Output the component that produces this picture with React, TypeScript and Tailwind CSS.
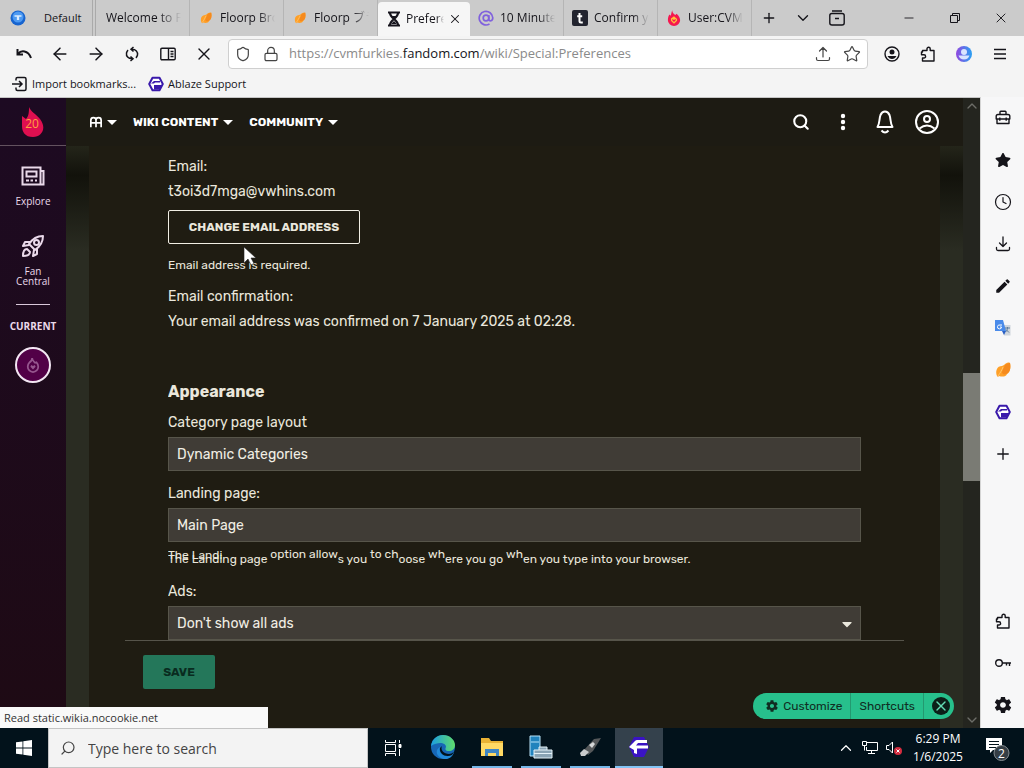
import type { ReactNode } from "react";
import {
  ArrowLeft,
  ArrowRight,
  ChevronDown,
  ChevronUp,
  Clock,
  Lock,
  Minus,
  Plus,
  Search,
  Shield,
  Star,
  X,
} from "lucide-react";
import { FaCaretDown, FaStar } from "react-icons/fa";
import { IoMdSettings } from "react-icons/io";
import { MdEdit } from "react-icons/md";

type IconProps = { className?: string };

function Leaf({ className }: IconProps) {
  return (
    <svg viewBox="0 0 16 16" className={className}>
      <path d="M2 14C0 9 2 4 7 4l2-1c2-2 4-3 6-2 1 5 0 9-3 11-1 3-5 3-8 2l-1 1z" fill="#ffa028" />
      <path d="M10 3c1-1 3-2 5-2 1 5 0 10-4 11-2 1-4 0-4-2z" fill="#f58a1e" />
      <path d="M3 14C5 11 7 8 8 5" stroke="#ffc56d" fill="none" />
    </svg>
  );
}

function Ablaze({ className }: IconProps) {
  return (
    <svg viewBox="0 0 16 16" className={className}>
      <path d="M4.500 1.800h7L14.800 8l-3.300 6.200h-7L1.200 8z" fill="#fff" stroke="#3a1aab" strokeWidth="2" strokeLinejoin="round" />
      <path d="m3 7.500 3-2.500h6v1.500H7L6 7.500zM6 9h8l-2.500 4.500H6z" fill="#3a1aab" />
    </svg>
  );
}

function Flame({ className }: IconProps) {
  return (
    <svg viewBox="0 0 16 18" className={className}>
      <path d="M6 0c0 3 2 4 3.500 5.500L11 4c3 3 4 5 4 7.500a7 6.500 0 0 1-14 0C1 8 2 6 3 5l1 1.500C5 5 5 2 6 0z" fill="#f5184f" />
      <path d="M8 15.500 4.500 12V9.500L8 7l3.500 3v2z" fill="#ffc23a" />
      <path d="m8 13.500-2-2V10l2 1.200L10 10v1.500z" fill="#f5184f" />
    </svg>
  );
}

function Puzzle({ className }: IconProps) {
  return (
    <svg viewBox="0 0 16 16" fill="none" stroke="currentColor" strokeWidth="1.400" strokeLinejoin="round" className={className}>
      <path d="M2.500 6V4.500H7V2.800a1.600 1.600 0 0 1 3.200 0v1.700H14V15H2.500v-3H4a1.500 1.500 0 0 0 0-3.200H1.500V6z" />
    </svg>
  );
}

function Account({ className }: IconProps) {
  return (
    <svg viewBox="0 0 16 16" fill="none" stroke="currentColor" strokeWidth="1.400" className={className}>
      <circle cx="8" cy="8" r="7" />
      <circle cx="8" cy="6" r="2.500" fill="currentColor" stroke="none" />
      <path d="M3.500 10h9c-1 2-2.500 3-4.500 3s-3.500-1-4.500-3z" fill="currentColor" stroke="none" />
    </svg>
  );
}

function Toolbox({ className }: IconProps) {
  return (
    <svg viewBox="0 0 16 16" fill="none" stroke="currentColor" strokeWidth="1.400" strokeLinejoin="round" className={className}>
      <path d="M5 4.500V2q0-.8.800-.8h4.400q.8 0 .8.800v2.500M3 4.500h10q1.800 0 1.800 1.800V9H1.200V6.300Q1.200 4.500 3 4.500zM2 9v4.500h12V9M4.800 7.500v3.200M11.200 7.500v3.200" />
    </svg>
  );
}

function Download({ className }: IconProps) {
  return (
    <svg viewBox="0 0 16 16" fill="none" stroke="currentColor" strokeWidth="1.300" strokeLinecap="round" strokeLinejoin="round" className={className}>
      <path d="M8 1v9.500M4.500 7 8 10.500 11.500 7M1.500 11.500V13q0 1.500 1.500 1.500h10q1.500 0 1.500-1.500v-1.500" />
    </svg>
  );
}

function Share({ className }: IconProps) {
  return (
    <svg viewBox="0 0 16 16" fill="none" stroke="currentColor" strokeWidth="1.200" strokeLinecap="round" strokeLinejoin="round" className={className}>
      <path d="M8 11V1.500M4.500 5 8 1.500 11.500 5M1.500 11.500V13q0 1.500 1.500 1.500h10q1.500 0 1.500-1.500v-1.500" />
    </svg>
  );
}

function Translate({ className }: IconProps) {
  return (
    <svg viewBox="0 0 16 16" className={className}>
      <path d="M6 5h9.500v10.500H9z" fill="#cfd5dc" />
      <path d="M0 0h8l3 11H0z" fill="#4a8bea" />
      <path d="M7 5H5a2 2 0 1 0 1.500 2H5" stroke="#fff" fill="none" />
      <path d="M10 8h5M12.500 7v1c0 2-1 3-2 4M11 9.500l3 3" stroke="#5f7d9c" fill="none" />
      <path d="M7 11h4l-2 4z" fill="#2a5fc4" />
    </svg>
  );
}

const tabs: { title: string; icon?: ReactNode; active?: boolean }[] = [
  { title: "Welcome to Floorp" },
  { title: "Floorp Browser", icon: <Leaf className="size-3" /> },
  { title: "Floorp ブラウザ", icon: <Leaf className="size-3" /> },
  {
    title: "Preferences",
    active: true,
    icon: (
      <svg viewBox="0 0 16 16" className="size-4">
        <path d="M2 1.500h12M2 14.500h12M4 2c0 5 8 7 8 12M12 2c0 5-8 7-8 12" stroke="#15131c" strokeWidth="2.200" fill="none" />
        <path d="M5.500 5h5L8 8zM8 10l3 3H5z" fill="#15131c" />
      </svg>
    ),
  },
  {
    title: "10 Minute Mail",
    icon: (
      <svg viewBox="0 0 16 16" fill="none" stroke="#8061dd" strokeWidth="1.700" className="size-4">
        <circle cx="8" cy="8" r="2.800" />
        <path d="M10.800 5v4.200c0 2.400 4 2.200 4-1.500A6.800 6.800 0 1 0 11.500 14" />
      </svg>
    ),
  },
  {
    title: "Confirm your email",
    icon: (
      <svg viewBox="0 0 16 16" className="size-4">
        <rect width="16" height="16" rx="2" fill="#22242f" />
        <path d="M7.500 3v8q0 1.500 1.500 1.500h1.800M5.200 6.300h5" stroke="#fff" strokeWidth="2" fill="none" />
      </svg>
    ),
  },
  { title: "User:CVM", icon: <Flame className="h-4 w-3.5" /> },
];

function TabStrip() {
  return (
    <div className="flex h-9 shrink-0 items-stretch bg-[#cbcbcb]">
      <button className="flex w-[93px] items-center gap-[18px] border-r border-[#aaa] pl-2.5 text-[11px]">
        <svg viewBox="0 0 16 16" className="size-4">
          <circle cx="8" cy="8" r="7.500" fill="#1764cf" />
          <circle cx="8" cy="7" r="5.500" fill="#4d9af2" />
          <path d="M4.500 6h3v4M11.500 6h-3v4" stroke="#d9ebff" strokeWidth="1.300" fill="none" />
        </svg>
        Default
      </button>
      <div className="ml-0.5 flex border-l border-[#aaa]">
        {tabs.map((tab) => (
          <div
            key={tab.title}
            className={
              tab.active
                ? "mt-0.5 flex w-[92px] items-center gap-1 rounded-t-sm bg-[#f6f6f6] px-2"
                : "flex w-[94px] items-center gap-1 border-r border-[#b5b5b5] pr-2 pl-2 first:pl-2.5"
            }
          >
            {tab.icon && <span className="flex w-4 shrink-0 justify-center">{tab.icon}</span>}
            <a
              href="#"
              className={
                tab.active
                  ? "w-10 overflow-hidden mask-r-from-80% whitespace-nowrap"
                  : "flex-1 overflow-hidden mask-r-from-70% whitespace-nowrap not-first:ml-0.5"
              }
            >
              {tab.title}
            </a>
            {tab.active && (
              <button aria-label="Close tab">
                <X className="size-3.5" strokeWidth={1.8} />
              </button>
            )}
          </div>
        ))}
      </div>
      <div className="flex flex-1 items-center">
        <button aria-label="New tab" className="flex w-[34px] justify-center">
          <Plus className="size-4" strokeWidth={2} />
        </button>
        <button aria-label="List all tabs" className="flex w-[34px] justify-center">
          <ChevronDown className="size-[18px]" strokeWidth={1.8} />
        </button>
        <button aria-label="Recent browsing" className="flex w-[34px] justify-center">
          <svg viewBox="0 0 16 16" fill="none" stroke="currentColor" strokeWidth="1.400" className="size-4">
            <path d="M3 1h10M.8 5.500Q.8 3.500 3 3.500h10q2.200 0 2.200 2V13q0 2-2.200 2H3q-2.200 0-2.200-2zM6 8.500h4" />
          </svg>
        </button>
        <div className="ml-auto flex items-center">
          <button aria-label="Minimize" className="flex w-[46px] justify-center">
            <Minus className="size-3.5" strokeWidth={1.5} />
          </button>
          <button aria-label="Restore" className="flex w-[46px] justify-center">
            <svg viewBox="0 0 12 12" fill="none" stroke="currentColor" className="size-3">
              <path d="M1.500 3.500h7v7h-7zM3.500 3.500v-2h7v7h-2" />
            </svg>
          </button>
          <button aria-label="Close" className="flex w-[46px] justify-center">
            <X className="size-4" strokeWidth={1.4} />
          </button>
        </div>
      </div>
    </div>
  );
}

function Toolbar() {
  return (
    <div className="flex h-[35px] shrink-0 items-center bg-[#f4f4f4] pl-1.5">
      <button aria-label="Undo close tab" className="flex w-9 justify-center">
        <svg viewBox="0 0 16 16" fill="none" stroke="currentColor" strokeWidth="2" className="size-4">
          <path d="M1.500 3v5.500H7M2 8c3-4 10-4 13 4" />
        </svg>
      </button>
      <button aria-label="Back" className="flex w-9 justify-center">
        <ArrowLeft className="size-5" strokeWidth={1.8} />
      </button>
      <button aria-label="Forward" className="flex w-9 justify-center">
        <ArrowRight className="size-5" strokeWidth={1.8} />
      </button>
      <button aria-label="Reload all tabs" className="flex w-9 justify-center">
        <svg viewBox="0 0 16 16" fill="none" stroke="currentColor" strokeWidth="1.500" className="size-4">
          <path d="M9.500 1 7 3.200l2.500 2.300M7.500 3.200C12 3 14 6 13.500 9q-.4 1.800-1.600 2.800M6.500 15 9 12.800l-2.500-2.300M8.500 12.800C4 13 2 10 2.500 7q.4-1.800 1.600-2.800" />
        </svg>
      </button>
      <button aria-label="Sidebar" className="flex w-9 justify-center">
        <svg viewBox="0 0 16 14" fill="none" stroke="currentColor" strokeWidth="1.400" className="h-3.5 w-4">
          <path d="M.8 2.500Q.8 1.200 2 1.200h12q1.200 0 1.200 1.300v9q0 1.300-1.200 1.300H2q-1.200 0-1.200-1.300zM8.500 1v12M10.500 4.500h3M10.500 7h3M10.500 9.500h3" />
        </svg>
      </button>
      <button aria-label="Stop" className="flex w-9 justify-center">
        <X className="size-5" strokeWidth={1.6} />
      </button>
      <div className="relative ml-1.5 flex h-[30px] flex-1 items-center rounded-sm border border-[#cfcfcf] bg-white px-1.5">
        <Shield className="size-4 text-[#444]" strokeWidth={1.8} />
        <Lock className="ml-3 size-4 text-[#444]" strokeWidth={1.8} />
        <label htmlFor="address" className="sr-only">Address</label>
        <input
          id="address"
          defaultValue="https://cvmfurkies.fandom.com/wiki/Special:Preferences"
          className="ml-2.5 min-w-0 flex-1 text-[13px] text-transparent outline-none"
        />
        {/* coloured copy of the address, the host is darker than the rest */}
        <div aria-hidden="true" className="pointer-events-none absolute left-[60px] text-[13px] text-[#8a8a8a]">
          https://cvmfurkies.<span className="text-[#15141a]">fandom.com</span>/wiki/Special:Preferences
        </div>
        <button aria-label="Share">
          <Share className="size-4 text-[#444]" />
        </button>
        <button aria-label="Bookmark" className="ml-3">
          <Star className="size-[18px] text-[#444]" strokeWidth={1.6} />
        </button>
      </div>
      <div className="ml-1.5 flex pr-1.5">
        <button aria-label="Account" className="flex w-9 justify-center">
          <Account className="size-4" />
        </button>
        <button aria-label="Extensions" className="flex w-9 justify-center">
          <Puzzle className="size-4" />
        </button>
        <button aria-label="Profile" className="flex w-9 justify-center">
          <svg viewBox="0 0 16 16" className="size-4">
            <defs>
              <linearGradient id="profile" x2="1">
                <stop stopColor="#9147df" />
                <stop offset="1" stopColor="#28a0f2" />
              </linearGradient>
            </defs>
            <circle cx="8" cy="8" r="8" fill="url(#profile)" />
            <circle cx="8" cy="6" r="3" fill="#d9e4ff" />
            <path d="M2.500 9.500h11C12.500 12 11 13.500 8 13.500s-4.500-1.500-5.500-4z" fill="#d9e4ff" />
          </svg>
        </button>
        <button aria-label="Menu" className="flex w-9 justify-center">
          <svg viewBox="0 0 16 16" stroke="currentColor" strokeWidth="1.500" className="size-4">
            <path d="M2 3.500h12M2 8h12M2 12.500h12" />
          </svg>
        </button>
      </div>
    </div>
  );
}

function Bookmarks() {
  return (
    <div className="flex h-[27px] shrink-0 items-center gap-3 border-b border-[#c5c5c5] bg-[#f4f4f4] pl-3 text-[11px]">
      <a href="#" className="flex items-center gap-1">
        <svg viewBox="0 0 16 16" fill="none" stroke="currentColor" strokeWidth="1.500" className="size-4">
          <path d="M4 4.500V3q0-1.500 1.500-1.500h7Q14 1.500 14 3v10q0 1.500-1.500 1.500h-7Q4 14.500 4 13v-1.500M0 8h9.500M7 5l3 3-3 3" />
        </svg>
        Import bookmarks...
      </a>
      <a href="#" className="flex items-center gap-1">
        <Ablaze className="size-4" />
        Ablaze Support
      </a>
    </div>
  );
}

function GlobalNav() {
  return (
    <nav className="flex w-[66px] shrink-0 flex-col items-center bg-linear-to-b from-[#1d0a22] to-[#1e0a14] text-[10px] leading-[10px] font-medium text-[#ead9ea]">
      <a href="#" aria-label="Fandom" className="flex h-12 w-full items-center justify-center border-b border-[#63525f]">
        <svg viewBox="0 0 24 32" className="h-8 w-6">
          <path d="M8 1c2 5 7 7 11 12 7 9 2 18-7 18C4 31 1 26 1 20V10l4 3c3-3 3-8 3-12z" fill="#df0f50" />
          <text x="11" y="22" textAnchor="middle" fontSize="12" fill="#ffa13d">20</text>
        </svg>
      </a>
      <a href="#" className="mt-5 flex flex-col items-center gap-2.5">
        <svg viewBox="0 0 24 20" fill="none" stroke="currentColor" strokeWidth="2" className="h-5 w-6">
          <path d="M1.500 1.500h18v17h-18zM19.500 5H22.500v13.500h-3M5.500 5.500h10v5h-10zM5 14.500h3M9.500 14.500h2.500M14 14.500h2" />
        </svg>
        Explore
      </a>
      <a href="#" className="mt-7 flex flex-col items-center gap-2 text-center">
        <svg viewBox="0 0 24 24" fill="none" stroke="currentColor" strokeWidth="2" strokeLinejoin="round" className="size-6">
          <path d="M22 2c-6 0-10 2-14 8l6 6c6-4 8-8 8-14zM9 8 4 8l-2 4 6-1M16 15v5l-4 2 1-6M6 15c-3 0-4 3-4 7 4 0 7-1 7-4z" />
          <circle cx="15.500" cy="8.500" r="2.500" />
        </svg>
        <span>
          Fan
          <br />
          Central
        </span>
      </a>
      <hr className="mt-[18px] w-[34px] border-[#d9c8d9]" />
      <span className="mt-4 font-bold">CURRENT</span>
      <a href="#" aria-label="Current wiki" className="mt-4 flex size-9 items-center justify-center rounded-full border-2 border-[#f3e6f3] bg-[#520047]">
        <svg viewBox="0 0 16 18" fill="none" stroke="#96568e" strokeWidth="2" className="h-4 w-3.5">
          <path d="M7 1c0 3 2 4 3.500 5.500L12 6c2 2 2 3 2 5a6 6 0 0 1-12 0c0-2 0-3 2-5 2-1 3-3 3-5z" />
          <path d="m8 14-3-3 1-2 2 1 2-1 1 2z" fill="#96568e" stroke="none" />
        </svg>
      </a>
    </nav>
  );
}

function WikiHeader() {
  return (
    <header className="flex h-12 shrink-0 items-center bg-[#1d1b13] pr-[15px] pl-6 text-white">
      <nav className="flex items-center gap-[15px] text-[12px] font-bold">
        <button aria-label="Wiki home" className="flex items-center gap-1">
          <svg viewBox="0 0 14 12" fill="none" stroke="currentColor" strokeWidth="2" className="h-3 w-3">
            <path d="M1 12V4q0-3 3-3t3 3v8M7 4q0-3 3-3t3 3v8M1 7h12" />
          </svg>
          <svg viewBox="0 0 12 12" fill="currentColor" className="size-3">
            <path d="M1 4h10L6 9z" />
          </svg>
        </button>
        <button className="flex items-center gap-1">
          WIKI CONTENT
          <svg viewBox="0 0 12 12" fill="currentColor" className="size-3">
            <path d="M1 4h10L6 9z" />
          </svg>
        </button>
        <button className="flex items-center gap-1">
          COMMUNITY
          <svg viewBox="0 0 12 12" fill="currentColor" className="size-3">
            <path d="M1 4h10L6 9z" />
          </svg>
        </button>
      </nav>
      <div className="ml-auto flex items-center">
        <button aria-label="Search" className="flex w-[42px] justify-center">
          <Search className="size-[18px]" strokeWidth={2.8} />
        </button>
        <button aria-label="More" className="flex w-[42px] justify-center">
          <svg viewBox="0 0 6 18" fill="currentColor" className="h-[18px] w-1.5">
            <circle cx="3" cy="3" r="2.200" />
            <circle cx="3" cy="9" r="2.200" />
            <circle cx="3" cy="15" r="2.200" />
          </svg>
        </button>
        <button aria-label="Notifications" className="flex w-[42px] justify-center">
          <svg viewBox="0 0 18 24" fill="none" stroke="currentColor" strokeWidth="2" strokeLinejoin="round" className="h-6 w-[18px]">
            <path d="M1.500 17C4 13 3 9 4.500 5Q6 1.500 9 1.500T13.500 5C15 9 14 13 16.500 17zM5.500 20.500q3.500 4 7 0" />
          </svg>
        </button>
        <button aria-label="User menu" className="flex w-[42px] justify-center">
          <svg viewBox="0 0 24 24" fill="none" stroke="currentColor" strokeWidth="2" className="size-6">
            <circle cx="12" cy="12" r="11" />
            <circle cx="12" cy="9" r="3" />
            <path d="M4.500 18.500q7.500-6 15 0" />
          </svg>
        </button>
      </div>
    </header>
  );
}

function Backdrop() {
  return (
    <div className="w-[23px] shrink-0 bg-linear-to-b from-[#24251a] via-[#12120b] via-5% to-[#2a2c22] to-18%" />
  );
}

function PreferencesForm() {
  const field = "mt-0.5 block h-[34px] w-full border border-[#57554a] bg-[#403c36] px-2 text-[14px] text-[#f1eee4]";

  return (
    <form className="mx-[79px] flex-1 overflow-hidden pt-2 text-[14px] leading-[25px] text-[#eae7dc]">
      <p>Email:</p>
      <p>t3oi3d7mga@vwhins.com</p>
      <button type="button" className="mt-1.5 block h-[34px] w-48 rounded-xs border border-[#f1eee4] text-[12px] leading-none font-bold">
        CHANGE EMAIL ADDRESS
      </button>
      <p className="mt-[11px] text-[12px] leading-[21px]">Email address is required.</p>
      <p className="mt-2">Email confirmation:</p>
      <p>Your email address was confirmed on 7 January 2025 at 02:28.</p>

      <h2 className="mt-[45px] text-[16px] font-bold">Appearance</h2>
      <label htmlFor="category" className="mt-1.5 block">Category page layout</label>
      <input id="category" defaultValue="Dynamic Categories" className={field} />
      <label htmlFor="landing" className="mt-2.5 block">Landing page:</label>
      <input id="landing" defaultValue="Main Page" className={field} />
      {/* half repainted line, some fragments still sit at their old height */}
      <p className="relative mt-1.5 h-[23px] text-[12px] leading-[23px] whitespace-nowrap">
        <span aria-hidden="true" className="absolute -top-1 left-0 h-[15px] overflow-hidden">The Landi</span>
        The Landing page <span className="align-[5px] leading-none">option allow</span>s you{" "}
        <span className="align-[5px] leading-none">to ch</span>oose{" "}
        <span className="align-[5px] leading-none">wh</span>ere you go{" "}
        <span className="align-[5px] leading-none">wh</span>en you type into your browser.
      </p>
      <label htmlFor="ads" className="mt-2 block">Ads:</label>
      <div className="relative">
        <select id="ads" className={`${field} appearance-none`}>
          <option>Don't show all ads</option>
        </select>
        <FaCaretDown className="pointer-events-none absolute top-2.5 right-1.5 size-4" />
      </div>
    </form>
  );
}

function WikiPage() {
  return (
    <main className="relative flex min-w-0 flex-1 flex-col bg-[#1f1c12] font-[Rubik,Inter,sans-serif]">
      <WikiHeader />
      <div className="flex min-h-0 flex-1">
        <Backdrop />
        <div className="flex min-w-0 flex-1 flex-col">
          <PreferencesForm />
          <div className="mx-9 h-[88px] shrink-0 border-t border-[#56544a] px-[18px] pt-3.5">
            <button className="h-[34px] w-[72px] rounded-xs bg-[#24775a] text-[12px] font-bold text-[#092b20]">SAVE</button>
          </div>
        </div>
        <Backdrop />
      </div>
      <div className="absolute right-[9px] bottom-[9px] flex h-[26px] items-center rounded-full bg-[#27c08c] pr-1 pl-3 text-[12px] text-[#102d22]">
        <button className="flex items-center gap-1 pr-2">
          <IoMdSettings className="size-3.5" />
          Customize
        </button>
        <button className="h-full border-x border-[#239970] px-2">Shortcuts</button>
        <button aria-label="Hide toolbar" className="ml-2 flex size-[18px] items-center justify-center rounded-full bg-[#0c1f18] text-[#65dcb3]">
          <X className="size-4" strokeWidth={2} />
        </button>
      </div>
      <svg viewBox="0 0 14 20" className="absolute top-[148px] left-[177px] h-5 w-3.5">
        <path d="M1 1v16l4-4 3 6 3-1.500L8 12h5z" fill="#fff" stroke="#222" strokeWidth=".6" />
      </svg>
    </main>
  );
}

const panels = [
  { label: "Toolbox", icon: <Toolbox className="size-4" /> },
  { label: "Bookmarks", icon: <FaStar className="size-4" /> },
  { label: "History", icon: <Clock className="size-[18px]" strokeWidth={1.6} /> },
  { label: "Downloads", icon: <Download className="size-4" /> },
  { label: "Notes", icon: <MdEdit className="size-[18px]" /> },
  { label: "Translate", icon: <Translate className="size-4" /> },
  { label: "Floorp", icon: <Leaf className="size-4" /> },
  { label: "Ablaze", icon: <Ablaze className="size-4" /> },
  { label: "Add panel", icon: <Plus className="size-[18px]" strokeWidth={1.8} /> },
];

const tools = [
  { label: "Add-ons", icon: <Puzzle className="size-4" /> },
  {
    label: "Passwords",
    icon: (
      <svg viewBox="0 0 16 16" fill="none" stroke="currentColor" strokeWidth="1.400" className="size-4">
        <circle cx="4" cy="8" r="3.300" />
        <path d="M7 8h9M11.500 8v2.500M14.500 8v3" />
      </svg>
    ),
  },
  { label: "Settings", icon: <IoMdSettings className="size-5" /> },
];

function Sidebar() {
  return (
    <aside className="-mt-px flex w-11 shrink-0 flex-col border-l border-[#d5d5d5] bg-[#f7f7f8] pb-0.5">
      {panels.map((panel) => (
        <button key={panel.label} aria-label={panel.label} className="flex h-[42px] items-center justify-center">
          {panel.icon}
        </button>
      ))}
      <div className="mt-auto">
        {tools.map((tool) => (
          <button key={tool.label} aria-label={tool.label} className="flex h-[42px] w-full items-center justify-center">
            {tool.icon}
          </button>
        ))}
      </div>
    </aside>
  );
}

const apps = [
  {
    label: "Microsoft Edge",
    style: "border-transparent w-[49px]",
    icon: (
      <svg viewBox="0 0 24 24" className="size-6">
        <defs>
          <linearGradient id="edge" x2="1">
            <stop stopColor="#1b9de2" />
            <stop offset="1" stopColor="#5fdc6b" />
          </linearGradient>
        </defs>
        <circle cx="12" cy="12" r="12" fill="#1766b5" />
        <path d="M0 11C1 4 6 0 12 0c7 0 12 5 12 10 0 4-3 6-6 6-4 0-4-2-3-4 0-4-7-6-15-1z" fill="url(#edge)" />
        <path d="M9 12c-2 5 3 10 9 9l5-4c-2 8-10 8-13 6-5-3-6-8-1-11z" fill="#2189d8" />
        <path d="M11 11c-2 4 2 8 7 8 2 0 3-1 5-2l-2 3c-6 3-13-1-12-7z" fill="#02121b" />
      </svg>
    ),
  },
  {
    label: "File Explorer",
    style: "border-[#75b6e8] w-10 mx-[5px]",
    icon: (
      <svg viewBox="0 0 22 20" className="h-5 w-[22px]">
        <path d="M0 1h8l2 3h12v15H0z" fill="#e9b234" />
        <path d="M0 6h22v13H0z" fill="#ffd964" />
        <path d="M4 12h14v7h-3v-3H7v3H4z" fill="#3f86c4" />
      </svg>
    ),
  },
  {
    label: "Server Manager",
    style: "border-[#75b6e8] w-10 mx-1",
    icon: (
      <svg viewBox="0 0 24 24" className="size-6">
        <path d="M1 1h10v20H1z" fill="#2183bd" stroke="#b8e3f9" />
        <path d="M2 7h8" stroke="#b8e3f9" />
        <path d="M5 15h18v8H5zM10 15v-3h8v3" fill="#8aa4b4" stroke="#e3f1f8" />
        <path d="M5 18.500h18" stroke="#e3f1f8" />
      </svg>
    ),
  },
  {
    label: "Setup tool",
    style: "border-[#75b6e8] w-10 mx-[5px]",
    icon: (
      <svg viewBox="0 0 24 24" className="size-6">
        <path d="m6 15 10-11 7-1-8 13-5 4z" fill="#55585a" />
        <path d="m2 18 4-4 5 3-4 4H3z" fill="#c9cbcc" />
        <path d="m11 10 4-3 2 2-3 4z" fill="#d6d8d9" />
      </svg>
    ),
  },
  {
    label: "Floorp",
    style: "border-[#83c4f5] w-12 bg-[#34414c]",
    icon: (
      <svg viewBox="0 0 24 24" className="size-6">
        <path d="M7 2h10l5 10-5 10H7L2 12z" fill="#3a13c4" />
        <path d="m2 12 6-6q1-1 2-1h10v3H11l-2 2.500h12v3H10V19l-3-1v-3z" fill="#fff" />
      </svg>
    ),
  },
];

function Taskbar() {
  return (
    <footer className="flex h-10 shrink-0 bg-[#02121b] text-white">
      <button aria-label="Start" className="flex w-12 items-center justify-center">
        <svg viewBox="0 0 16 16" fill="#fff" className="size-4">
          <path d="m0 2.300 6.500-.9v6.200H0zM7.300 1.200 16 0v7.600H7.300zM0 8.400h6.500v6.200L0 13.700zM7.300 8.400H16V16l-8.700-1.200z" />
        </svg>
      </button>
      <div className="flex w-80 items-center gap-3 border border-[#c4c4c4] bg-[#f3f3f3] pl-[11px] text-[#444]">
        <Search className="size-4 -scale-x-100" strokeWidth={1.8} />
        <label htmlFor="search" className="sr-only">Search Windows</label>
        <input id="search" placeholder="Type here to search" className="w-60 text-[14px] outline-none placeholder:text-[#444]" />
      </div>
      <button aria-label="Task view" className="flex w-[50px] items-center justify-center">
        <svg viewBox="0 0 18 16" fill="none" stroke="currentColor" className="h-4 w-[18px]">
          <path d="M1.500 0v2.500h10V0M1.500 16v-2.500h10V16M1.500 4.500h10v7h-10zM15.500 0v3M15.500 9v7" />
          <path d="M15 4.500h2v3h-2z" fill="currentColor" />
        </svg>
      </button>
      {apps.map((app) => (
        <button key={app.label} aria-label={app.label} className={`flex items-center justify-center border-b-2 ${app.style}`}>
          {app.icon}
        </button>
      ))}
      <div className="ml-auto flex items-center">
        <button aria-label="Show hidden icons" className="flex w-6 justify-center">
          <ChevronUp className="size-[18px]" strokeWidth={1.6} />
        </button>
        <button aria-label="Network" className="flex w-6 justify-center">
          <svg viewBox="0 0 16 16" fill="none" stroke="currentColor" className="size-4">
            <path d="M5 2.500h10.500v8H4.500V7M9.500 10.500v3M6 13.500h7M.5 1.500h4v4h-4zM2.500 5.500v5" />
          </svg>
        </button>
        <button aria-label="Volume muted" className="flex w-6 justify-center">
          <svg viewBox="0 0 16 16" fill="none" stroke="currentColor" className="size-4">
            <path d="M.5 5.500H3L6.500 2v11L3 9.500H.5z" />
            <circle cx="12" cy="11" r="4" fill="#d42c3f" stroke="none" />
            <path d="m10.500 9.500 3 3M13.500 9.500l-3 3" />
          </svg>
        </button>
        <div className="w-16 text-center text-[12px] leading-[18px]">
          6:29 PM
          <br />
          1/6/2025
        </div>
        <button aria-label="Notifications" className="ml-1.5 flex w-12 justify-center pr-1">
          <svg viewBox="0 0 24 26" className="h-[26px] w-6">
            <path d="M0 3h16v12H7l-3 3v-3H0z" fill="#fff" />
            <path d="M3 6.500h10M3 9.500h10M3 12.500h7" stroke="#02121b" />
            <circle cx="15.500" cy="18" r="7.500" fill="#353e45" stroke="#858d92" />
            <text x="15.500" y="22.500" textAnchor="middle" fontSize="12" fill="#fff">2</text>
          </svg>
        </button>
      </div>
    </footer>
  );
}

export default function App() {
  return (
    <div className="flex h-screen flex-col overflow-hidden bg-[#f4f4f4] font-['Open_Sans','Noto_Sans_CJK_JP',sans-serif] text-[12px] text-[#15141a]">
      <TabStrip />
      <Toolbar />
      <Bookmarks />
      <div className="relative flex min-h-0 flex-1">
        <GlobalNav />
        <WikiPage />
        <div className="flex w-[17px] shrink-0 flex-col items-center bg-[#24251f] text-[#6d6e68]">
          <ChevronUp className="size-4" />
          <div className="min-h-0 flex-[259]" />
          <div className="h-[108px] w-full bg-[#7a7b74]" />
          <div className="min-h-0 flex-[231]" />
          <ChevronDown className="size-4" />
        </div>
        <Sidebar />
        <div className="absolute bottom-0 left-0 h-[21px] w-[268px] bg-[#f9f9f9] px-1 text-[11px] leading-[21px] text-[#333]">
          Read static.wikia.nocookie.net
        </div>
      </div>
      <Taskbar />
    </div>
  );
}
